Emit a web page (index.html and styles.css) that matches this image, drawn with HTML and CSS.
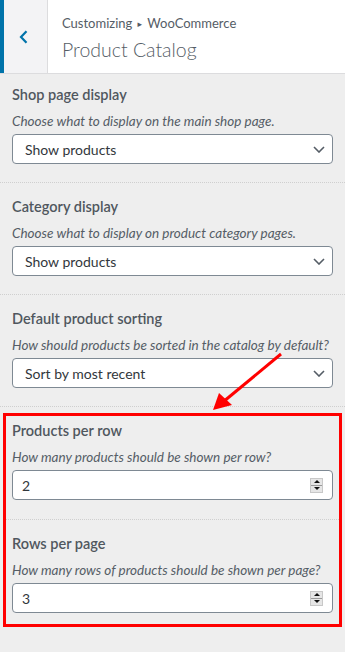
FILE: index.html
```html
<!DOCTYPE html>
<html lang="en">
<head>
    <meta charset="UTF-8">
    <meta name="viewport" content="width=device-width, initial-scale=1.0">
    <title>Product Catalog</title>
    <link rel="stylesheet" href="styles.css">
</head>
<body>
    <div class="customizer">
        <div class="panel-header">
            <button class="back-button" aria-label="Back">
                <svg width="9" height="14" viewBox="0 0 9 14"><polyline points="7.5,1.2 2,7 7.5,12.8" fill="none" stroke="#0073aa" stroke-width="2.2"/></svg>
            </button>
            <div class="panel-title">
                <span class="customize-action">Customizing <span class="crumb-arrow">&#9656;</span> WooCommerce</span>
                <h2>Product Catalog</h2>
            </div>
        </div>

        <div class="control">
            <label for="shop-display">Shop page display</label>
            <span class="description">Choose what to display on the main shop page.</span>
            <div class="select-wrap">
                <select id="shop-display">
                    <option>Show products</option>
                    <option>Show categories</option>
                </select>
                <svg class="chevron" width="12" height="7" viewBox="0 0 12 7"><polyline points="1,1 6,6 11,1" fill="none" stroke="#555d66" stroke-width="1.6"/></svg>
            </div>
        </div>

        <div class="control">
            <label for="category-display">Category display</label>
            <span class="description">Choose what to display on product category pages.</span>
            <div class="select-wrap">
                <select id="category-display">
                    <option>Show products</option>
                    <option>Show subcategories</option>
                </select>
                <svg class="chevron" width="12" height="7" viewBox="0 0 12 7"><polyline points="1,1 6,6 11,1" fill="none" stroke="#555d66" stroke-width="1.6"/></svg>
            </div>
        </div>

        <div class="control">
            <label for="default-sorting">Default product sorting</label>
            <span class="description">How should products be sorted in the catalog by default?</span>
            <div class="select-wrap">
                <select id="default-sorting">
                    <option>Sort by most recent</option>
                    <option>Popularity</option>
                </select>
                <svg class="chevron" width="12" height="7" viewBox="0 0 12 7"><polyline points="1,1 6,6 11,1" fill="none" stroke="#555d66" stroke-width="1.6"/></svg>
            </div>
        </div>

        <div class="highlight">
            <div class="control">
                <label for="per-row">Products per row</label>
                <span class="description">How many products should be shown per row?</span>
                <div class="number-wrap">
                    <input type="number" id="per-row" value="2">
                    <span class="spinner"><span class="spin-up"></span><span class="spin-down"></span></span>
                </div>
            </div>
            <div class="control">
                <label for="rows-page">Rows per page</label>
                <span class="description">How many rows of products should be shown per page?</span>
                <div class="number-wrap">
                    <input type="number" id="rows-page" value="3">
                    <span class="spinner"><span class="spin-up"></span><span class="spin-down"></span></span>
                </div>
            </div>
        </div>

        <svg class="annotation" width="345" height="652" viewBox="0 0 345 652">
            <line x1="281" y1="354" x2="223" y2="402" stroke="#ff0000" stroke-width="3"/>
            <polygon points="213,410 219,393 232,405" fill="#ff0000"/>
        </svg>
    </div>
</body>
</html>
```

FILE: styles.css
```css
body {
    margin: 0;
    background-color: #eeeeee;
    font-family: Lato, "Noto Sans", sans-serif;
    color: #555d66;
}
.customizer {
    position: relative;
    width: 345px;
    min-height: 652px;
}
.panel-header {
    display: flex;
    height: 73px;
    background-color: #fff;
    border-bottom: 1px solid #dcdcde;
}
.back-button {
    width: 48px;
    padding: 0 0 0 15px;
    margin: 0;
    border: none;
    border-left: 4px solid #0073aa;
    border-right: 1px solid #dcdcde;
    background-color: #f3f3f5;
    display: flex;
    align-items: center;
    cursor: pointer;
}
.panel-title {
    padding: 14px 0 0 14px;
}
.customize-action {
    display: block;
    font-size: 13px;
    line-height: 18px;
    color: #555d66;
}
.crumb-arrow {
    font-family: "DejaVu Sans", sans-serif;
    font-size: 9px;
    vertical-align: 1px;
    padding: 0 2px;
}
h2 {
    margin: 3px 0 0;
    font-size: 19.5px;
    line-height: 27px;
    font-weight: 300;
    color: #555d66;
}
.control {
    padding: 14px 12px 18px;
    border-bottom: 1px dotted #cfcfcf;
}
.panel-header + .control {
    padding-top: 11px;
}
label {
    display: block;
    font-size: 14.5px;
    line-height: 20px;
    font-weight: 600;
    margin-bottom: 7px;
    color: #50575e;
}
.description {
    display: block;
    font-size: 13.5px;
    line-height: 18px;
    font-style: italic;
    margin-bottom: 4px;
    color: #555d66;
}
.select-wrap,
.number-wrap {
    display: grid;
}
.select-wrap select,
.select-wrap .chevron,
.number-wrap input,
.number-wrap .spinner {
    grid-area: 1 / 1;
}
select,
input[type="number"] {
    -webkit-appearance: none;
    appearance: none;
    width: 100%;
    height: 30px;
    box-sizing: border-box;
    margin: 0;
    border: 1px solid #7e8993;
    border-radius: 4px;
    background-color: #fff;
    font-family: Lato, "Noto Sans", sans-serif;
    font-size: 14px;
    color: #32373c;
}
select {
    padding: 0 30px 0 12px;
}
input[type="number"] {
    padding: 0 30px 0 9px;
    -moz-appearance: textfield;
}
input[type="number"]::-webkit-inner-spin-button,
input[type="number"]::-webkit-outer-spin-button {
    -webkit-appearance: none;
    margin: 0;
}
.chevron {
    justify-self: end;
    align-self: center;
    margin-right: 8px;
    pointer-events: none;
}
.spinner {
    justify-self: end;
    align-self: center;
    margin-right: 10px;
    width: 13px;
    height: 15px;
    display: flex;
    flex-direction: column;
    border: 1px solid #c8c8c8;
    box-sizing: border-box;
    background-color: #e6e6e6;
}
.spin-up,
.spin-down {
    flex: 1;
    display: flex;
    align-items: center;
    justify-content: center;
}
.spin-up {
    border-bottom: 1px solid #9a9a9a;
}
.spin-up::before {
    content: "";
    border-left: 3px solid transparent;
    border-right: 3px solid transparent;
    border-bottom: 3px solid #111;
}
.spin-down::before {
    content: "";
    border-left: 3px solid transparent;
    border-right: 3px solid transparent;
    border-top: 3px solid #111;
}
.highlight {
    margin: 6px 3px 0;
    border: 3px solid #ff0000;
}
.highlight .control {
    padding-left: 6px;
    padding-right: 6px;
}
.highlight .control:first-child {
    padding-top: 5px;
    padding-bottom: 19px;
}
.highlight .control:last-child {
    border-bottom: none;
    padding-bottom: 11px;
}
.annotation {
    position: absolute;
    left: 0;
    top: 0;
    pointer-events: none;
}
```
